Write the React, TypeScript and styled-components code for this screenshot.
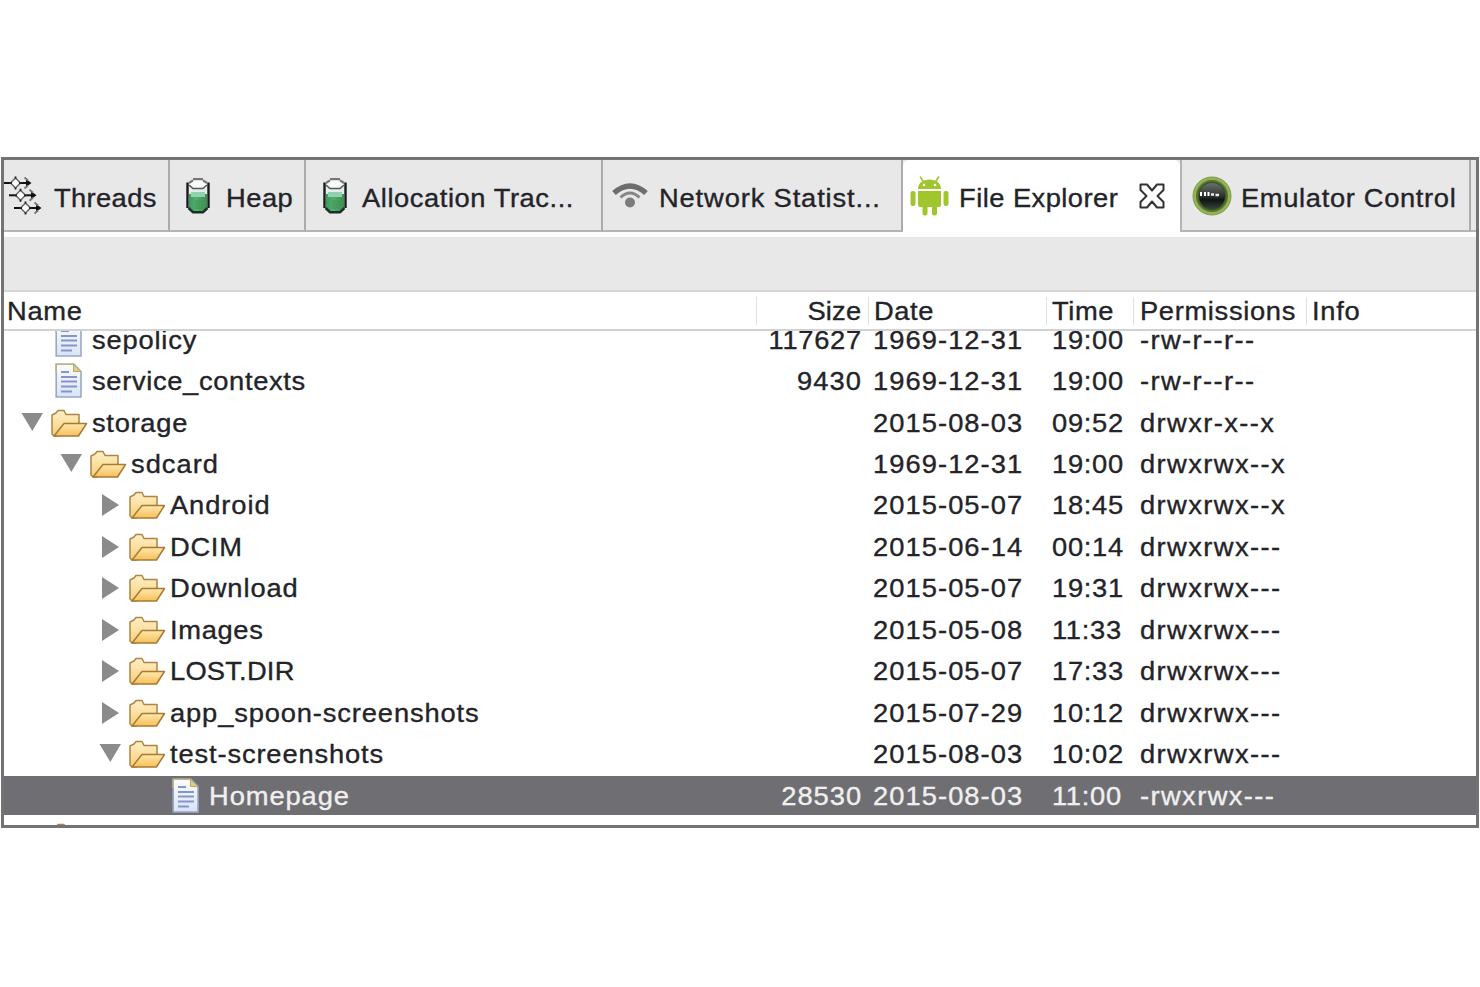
import React from 'react';
import styled, { createGlobalStyle } from 'styled-components';

const GlobalStyle = createGlobalStyle`
  *, *::before, *::after { box-sizing: border-box; }
  body {
    margin: 0;
    background: #fff;
    font-family: "Liberation Sans", Arial, sans-serif;
    font-size: 26px;
    color: #232328;
  }
  svg { display: block; flex: none; }
`;

const Page = styled.main`
  display: flex;
  height: 987px;
  padding: 157px 1px 0;
  overflow: hidden;
`;

const Panel = styled.section`
  display: flex;
  flex-direction: column;
  width: 1478px;
  height: 671px;
  border: 3px solid #737373;
  background: #fff;
  overflow: hidden;
`;

const TabBar = styled.div`
  display: flex;
  height: 72px;
  flex: none;
  background: #e8e8e8;
`;

const Tab = styled.div<{ $width: number; $active?: boolean; $inset: number }>`
  display: flex;
  align-items: center;
  flex: none;
  width: ${p => p.$width}px;
  padding: ${p => (p.$active ? 4 : 6)}px 0 0 ${p => p.$inset}px;
  background: ${p => (p.$active ? '#fff' : '#e8e8e8')};
  border-right: ${p => (p.$active ? '0' : '2px solid #acacac')};
  border-bottom: ${p => (p.$active ? '0' : '2px solid #b4b4b4')};
  border-radius: ${p => (p.$active ? '6px 6px 0 0' : '0')};
`;

const LastTab = styled(Tab)`
  border-left: 2px solid #b4b4b4;
`;

const TabFill = styled.div`
  flex: 1;
  border-bottom: 2px solid #b4b4b4;
`;

const TabIcon = styled.span<{ $width: number }>`
  display: flex;
  flex: none;
  align-items: center;
  width: ${p => p.$width}px;
  padding-bottom: 4px;
`;

const Label = styled.span<{ $track: number; $end?: boolean }>`
  display: inline-block;
  letter-spacing: ${p => (p.$track * 0.95 - 0.65).toFixed(2)}px;
  line-height: 28px;
  white-space: pre;
  transform: scaleX(1.05);
  transform-origin: ${p => (p.$end ? 'right' : 'left')} center;
  -webkit-text-stroke: 0.35px currentColor;
`;

const CloseSlot = styled.span`
  display: flex;
  margin-left: auto;
  padding: 0 15px 5px 0;
`;

const Toolbar = styled.div`
  flex: none;
  height: 60px;
  border-top: 5px solid #fff;
  border-bottom: 2px solid #d6d6d6;
  background: #e8e8e8;
`;

const columns = '752px 112px 178px 87px 173px 1fr';

const HeaderRow = styled.div`
  display: grid;
  grid-template-columns: ${columns};
  flex: none;
  height: 39px;
  border-bottom: 2px solid #d2d2d2;
`;

const HeaderCell = styled.div<{ $inset: number; $first?: boolean; $right?: boolean }>`
  display: flex;
  align-items: center;
  justify-content: ${p => (p.$right ? 'flex-end' : 'flex-start')};
  margin: 5px 0 4px;
  padding: 0 ${p => (p.$right ? p.$inset : 0)}px 0 ${p => (p.$right ? 0 : p.$inset)}px;
  border-left: ${p => (p.$first ? '0' : '1px solid #e0e0e0')};
`;

const Body = styled.div`
  flex: 1;
  min-height: 0;
  overflow: hidden;
`;

const Rows = styled.div`
  margin-top: -12px;
`;

const Row = styled.div<{ $selected?: boolean }>`
  display: grid;
  grid-template-columns: ${columns};
  align-items: center;
  height: 41.45px;
  border: solid transparent;
  border-width: 1.2px 0;
  background: ${p => (p.$selected ? '#6f6e73' : 'transparent')};
  background-clip: padding-box;
  color: ${p => (p.$selected ? '#f0f0f0' : 'inherit')};
`;

const NameCell = styled.div<{ $depth: number }>`
  display: flex;
  align-items: center;
  height: 38px;
  padding-left: ${p => 16.5 + p.$depth * 39.2}px;
`;

const ArrowSlot = styled.span`
  display: flex;
  flex: none;
  width: 29px;
`;

const IconSlot = styled.span`
  display: flex;
  flex: none;
  width: 42px;
`;

const Cell = styled.div<{ $inset: number; $right?: boolean }>`
  display: flex;
  justify-content: ${p => (p.$right ? 'flex-end' : 'flex-start')};
  padding: 0 ${p => (p.$right ? p.$inset : 0)}px 0 ${p => (p.$right ? 0 : p.$inset)}px;
`;

const ThreadArrow = ({ x, y }: { x: number; y: number }) => (
  <g transform={`translate(${x} ${y})`}>
    <path d="M0 0H25" stroke="#111" strokeWidth="2" />
    <path d="M27.5 0L22 -4V4Z" fill="#111" />
    <path d="M20.5 -5.5L24 -2.5M20.5 5.5L24 2.5" stroke="#777" strokeWidth="1.8" />
    <path d="M11.5 -5L16.5 0L11.5 5L6.5 0Z" fill="#fff" stroke="#666" strokeWidth="1.5" />
    <path d="M11.5 -6.5V-4.5M11.5 6.5V4.5M6 0H8M15 0H17" stroke="#222" strokeWidth="1.8" />
  </g>
);

const ThreadsIcon = () => (
  <svg width="40" height="40" viewBox="0 0 40 40">
    <ThreadArrow x={0} y={7} />
    <ThreadArrow x={5} y={19.3} />
    <ThreadArrow x={10} y={32} />
  </svg>
);

const HeapIcon = () => (
  <svg width="24" height="36" viewBox="0 0 24 36">
    <defs>
      <linearGradient id="heapFill" x1="0" x2="1">
        <stop offset="0" stopColor="#3a9a5c" />
        <stop offset="0.4" stopColor="#55ad72" />
        <stop offset="1" stopColor="#3b8f50" />
      </linearGradient>
    </defs>
    <path d="M2 6L6 2H18L22 6V30L18 34H6L2 30Z" fill="#e6ece8" />
    <path d="M3 16H21V30L17 33H7L3 30Z" fill="url(#heapFill)" />
    <path d="M5 14H19V19H5Z" fill="#8fd3ac" />
    <path d="M9 22H19V29L16 31H9Z" fill="#3f9a53" opacity="0.6" />
    <path d="M7 2H17L21 5V8L17 10H7L3 8V5Z" fill="#fafafa" />
    <path d="M7 1.2H17M3 5L7 2.4M17 2.4L21 5" stroke="#777" strokeWidth="2.2" />
    <path d="M3 7L7 10.5H17L21 7" fill="none" stroke="#555" strokeWidth="1.5" />
    <path d="M1.5 4.5V30M22.5 4.5V30" fill="none" stroke="#161c19" strokeWidth="2.4" />
    <path d="M2.5 30L7 34.2H17L21.5 30" fill="none" stroke="#1b3022" strokeWidth="2.4" />
  </svg>
);

const WifiIcon = () => (
  <svg width="36" height="26" viewBox="0 0 36 26">
    <path d="M2 10Q18 -4 34 10" fill="none" stroke="#6d6d6d" strokeWidth="5.5" />
    <path d="M8.5 14.5Q18 5.5 27.5 14.5" fill="none" stroke="#858585" strokeWidth="3" />
    <circle cx="18" cy="19.5" r="5" fill="#7c7c7c" />
  </svg>
);

const AndroidIcon = () => (
  <svg width="39" height="40" viewBox="0 0 39 40">
    <g fill="#a1c62d">
      <path d="M8 13C8 7 13 3.5 19.5 3.5S31 7 31 13Z" />
      <path d="M8 15H31V29Q31 31 29 31H10Q8 31 8 29Z" />
      <rect x="0.5" y="15" width="5" height="15" rx="2.2" />
      <rect x="33.5" y="15" width="5" height="15" rx="2.2" />
      <rect x="12.5" y="29" width="5" height="10.5" rx="2" />
      <rect x="22" y="29" width="5" height="10.5" rx="2" />
    </g>
    <path d="M10.5 1L13.5 6M28.5 1L25.5 6" stroke="#a1c62d" strokeWidth="1.6" strokeLinecap="round" />
    <circle cx="14" cy="9" r="1.3" fill="#fff" />
    <circle cx="25" cy="9" r="1.3" fill="#fff" />
  </svg>
);

const CloseIcon = () => (
  <svg width="26" height="26" viewBox="0 0 26 26">
    <path
      d="M1.5 1.5H8L13 7.5L18 1.5H24.5V7L18.5 13L24.5 19V24.5H18L13 18.5L8 24.5H1.5V19L7.5 13L1.5 7Z"
      fill="#fff"
      stroke="#333"
      strokeWidth="2"
      strokeLinejoin="round"
    />
  </svg>
);

const EmulatorIcon = () => (
  <svg width="40" height="40" viewBox="0 0 40 40">
    <defs>
      <linearGradient id="emuBall" x1="0" y1="0" x2="0" y2="1">
        <stop offset="0" stopColor="#6a706c" />
        <stop offset="0.5" stopColor="#2e3331" />
        <stop offset="0.65" stopColor="#101412" />
        <stop offset="1" stopColor="#39423a" />
      </linearGradient>
    </defs>
    <circle cx="20" cy="20" r="19" fill="#91b353" stroke="#7d9c45" />
    <circle cx="20" cy="20" r="15" fill="#3a5220" stroke="#55702f" strokeWidth="2" />
    <circle cx="20" cy="20" r="13" fill="url(#emuBall)" />
    <path d="M9 16V20M13 16V20M16.5 16V20" stroke="#fff" strokeWidth="2" />
    <path d="M19 18.5H22M23.5 19H27" stroke="#e9e9e9" strokeWidth="2.6" />
  </svg>
);

const FolderIcon = () => (
  <svg width="38" height="30" viewBox="0 0 38 30">
    <defs>
      <linearGradient id="folderBack" x1="0" y1="0" x2="0" y2="1">
        <stop offset="0" stopColor="#fff0c8" />
        <stop offset="1" stopColor="#f6cf78" />
      </linearGradient>
      <linearGradient id="folderFront" x1="0" y1="0" x2="0" y2="1">
        <stop offset="0" stopColor="#ffe9ae" />
        <stop offset="1" stopColor="#f6bf58" />
      </linearGradient>
    </defs>
    <path d="M2 26V7L6 5L8 2.5H14L16 6.5H29V15L8 28H4Z" fill="url(#folderBack)" stroke="#b18345" strokeWidth="1.5" strokeLinejoin="round" />
    <path d="M4 28L14 15.5H36.5L28.5 28Z" fill="url(#folderFront)" stroke="#a97936" strokeWidth="1.5" strokeLinejoin="round" />
  </svg>
);

const FileIcon = () => (
  <svg width="36" height="36" viewBox="-5 0 36 36">
    <defs>
      <linearGradient id="sheet" x1="0" y1="0" x2="0" y2="1">
        <stop offset="0" stopColor="#fbfcfb" />
        <stop offset="1" stopColor="#d7e4f8" />
      </linearGradient>
    </defs>
    <path d="M1.2 1.2H19L26 8.5V34H1.2Z" fill="url(#sheet)" stroke="#9ba8c4" strokeWidth="1.6" />
    <path d="M1.2 10V1.2H19" fill="none" stroke="#bdb489" strokeWidth="1.6" />
    <path d="M18.5 1.2L26 8.5H18.5Z" fill="#dfcf86" stroke="#bba961" />
    <path d="M6 9H14M6 14H22M6 18.5H22M6 23.5H22M6 28.5H17" stroke="#8794ca" strokeWidth="1.9" />
  </svg>
);

const Arrow = ({ open }: { open: boolean }) => (
  <svg width="23" height="24" viewBox="0 0 23 24">
    <path d={open ? 'M0.5 2H22L11.3 20Z' : 'M3 1L20 12L3 23Z'} fill="#8b8b8b" />
  </svg>
);

type Entry = {
  name: string;
  track: number;
  depth: number;
  kind: 'file' | 'open' | 'closed';
  size?: string;
  sizeTrack?: number;
  date: string;
  time: string;
  perms: string;
  selected?: boolean;
};

const entries: Entry[] = [
  { name: 'sepolicy', track: 1.5, depth: 0, kind: 'file', size: '117627', sizeTrack: 1.4, date: '1969-12-31', time: '19:00', perms: '-rw-r--r--' },
  { name: 'service_contexts', track: 1.35, depth: 0, kind: 'file', size: '9430', sizeTrack: 1.75, date: '1969-12-31', time: '19:00', perms: '-rw-r--r--' },
  { name: 'storage', track: 1.4, depth: 0, kind: 'open', date: '2015-08-03', time: '09:52', perms: 'drwxr-x--x' },
  { name: 'sdcard', track: 1.7, depth: 1, kind: 'open', date: '1969-12-31', time: '19:00', perms: 'drwxrwx--x' },
  { name: 'Android', track: 1.6, depth: 2, kind: 'closed', date: '2015-05-07', time: '18:45', perms: 'drwxrwx--x' },
  { name: 'DCIM', track: 1.4, depth: 2, kind: 'closed', date: '2015-06-14', time: '00:14', perms: 'drwxrwx---' },
  { name: 'Download', track: 1.6, depth: 2, kind: 'closed', date: '2015-05-07', time: '19:31', perms: 'drwxrwx---' },
  { name: 'Images', track: 1.35, depth: 2, kind: 'closed', date: '2015-05-08', time: '11:33', perms: 'drwxrwx---' },
  { name: 'LOST.DIR', track: 0.9, depth: 2, kind: 'closed', date: '2015-05-07', time: '17:33', perms: 'drwxrwx---' },
  { name: 'app_spoon-screenshots', track: 1.55, depth: 2, kind: 'closed', date: '2015-07-29', time: '10:12', perms: 'drwxrwx---' },
  { name: 'test-screenshots', track: 1.55, depth: 2, kind: 'open', date: '2015-08-03', time: '10:02', perms: 'drwxrwx---' },
  { name: 'Homepage', track: 1.6, depth: 3, kind: 'file', size: '28530', sizeTrack: 1.75, date: '2015-08-03', time: '11:00', perms: '-rwxrwx---', selected: true },
];

const FileRow = ({ entry }: { entry: Entry }) => (
  <Row $selected={entry.selected}>
    <NameCell $depth={entry.depth}>
      <ArrowSlot>{entry.kind !== 'file' && <Arrow open={entry.kind === 'open'} />}</ArrowSlot>
      <IconSlot>{entry.kind === 'file' ? <FileIcon /> : <FolderIcon />}</IconSlot>
      <Label $track={entry.track}>{entry.name}</Label>
    </NameCell>
    <Cell $right $inset={6}>
      {entry.size && <Label $end $track={entry.sizeTrack ?? 1.7}>{entry.size}</Label>}
    </Cell>
    <Cell $inset={5}><Label $track={1.75}>{entry.date}</Label></Cell>
    <Cell $inset={5.5}><Label $track={1.4}>{entry.time}</Label></Cell>
    <Cell $inset={7}><Label $track={2.1}>{entry.perms}</Label></Cell>
  </Row>
);

export default function App() {
  return (
    <Page>
      <GlobalStyle />
      <Panel>
        <TabBar>
          <Tab $width={166} $inset={0}>
            <TabIcon $width={49.5}><ThreadsIcon /></TabIcon>
            <Label $track={1.05}>Threads</Label>
          </Tab>
          <Tab $width={136} $inset={16}>
            <TabIcon $width={40}><HeapIcon /></TabIcon>
            <Label $track={1.2}>Heap</Label>
          </Tab>
          <Tab $width={297} $inset={17}>
            <TabIcon $width={39}><HeapIcon /></TabIcon>
            <Label $track={1.25}>Allocation Trac...</Label>
          </Tab>
          <Tab $width={300} $inset={9}>
            <TabIcon $width={47}><WifiIcon /></TabIcon>
            <Label $track={1.55}>Network Statist...</Label>
          </Tab>
          <Tab $width={277} $inset={7} $active>
            <TabIcon $width={48.5}><AndroidIcon /></TabIcon>
            <Label $track={1.15}>File Explorer</Label>
            <CloseSlot><CloseIcon /></CloseSlot>
          </Tab>
          <LastTab $width={291} $inset={10}>
            <TabIcon $width={49}><EmulatorIcon /></TabIcon>
            <Label $track={1.35}>Emulator Control</Label>
          </LastTab>
          <TabFill />
        </TabBar>
        <Toolbar />
        <HeaderRow>
          <HeaderCell $first $inset={2.5}><Label $track={1.4}>Name</Label></HeaderCell>
          <HeaderCell $right $inset={6.5}><Label $end $track={0.9}>Size</Label></HeaderCell>
          <HeaderCell $inset={4.5}><Label $track={1.3}>Date</Label></HeaderCell>
          <HeaderCell $inset={5}><Label $track={1.3}>Time</Label></HeaderCell>
          <HeaderCell $inset={5.5}><Label $track={1.35}>Permissions</Label></HeaderCell>
          <HeaderCell $inset={5}><Label $track={1.4}>Info</Label></HeaderCell>
        </HeaderRow>
        <Body>
          <Rows>
            {entries.map(entry => <FileRow key={entry.name} entry={entry} />)}
            <Row>
              <NameCell $depth={0}>
                <ArrowSlot />
                <IconSlot><FolderIcon /></IconSlot>
              </NameCell>
            </Row>
          </Rows>
        </Body>
      </Panel>
    </Page>
  );
}
